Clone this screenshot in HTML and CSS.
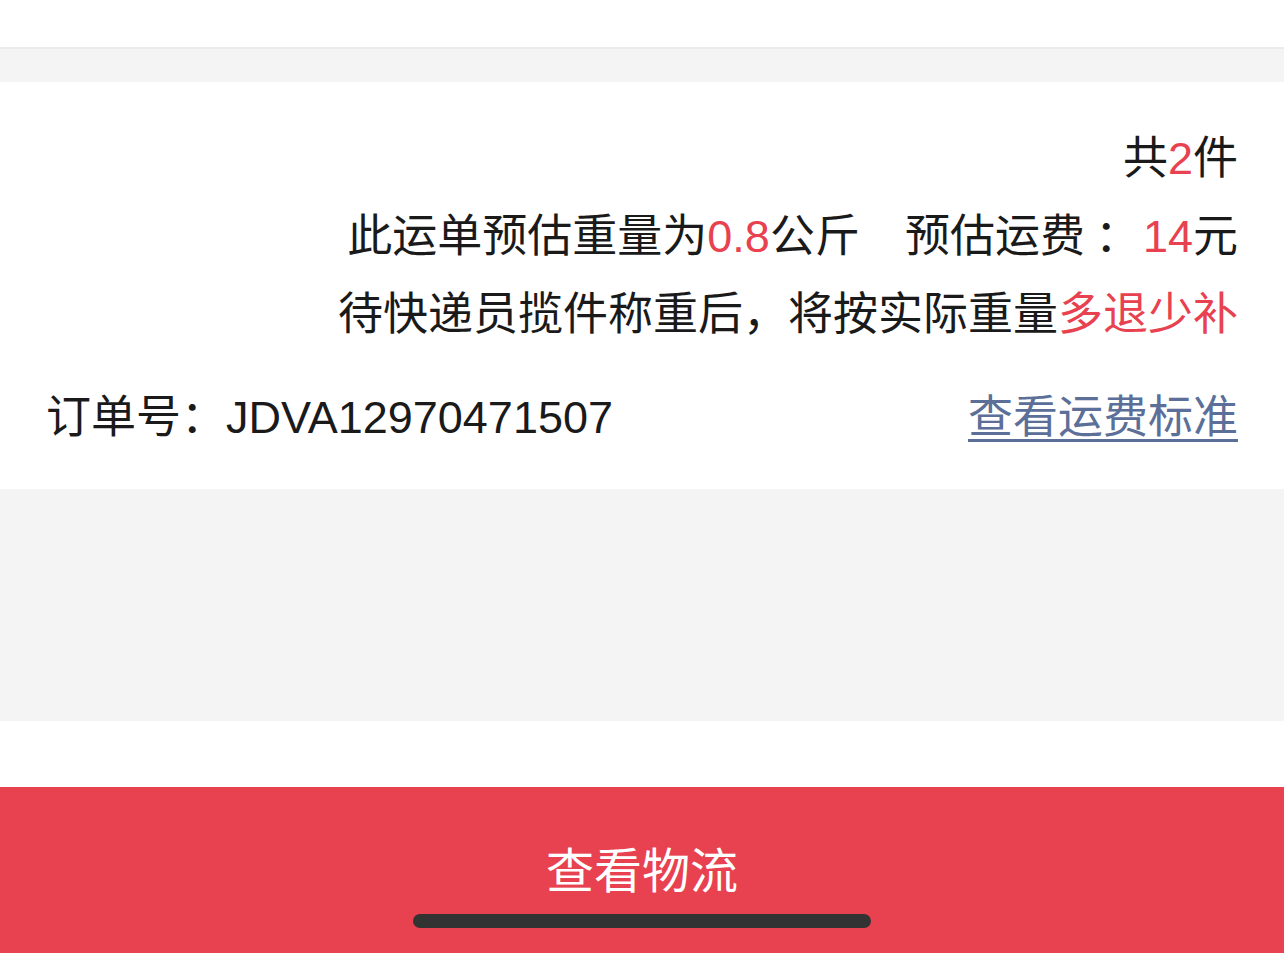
FILE: index.html
```html
<!DOCTYPE html>
<html lang="zh-CN">
<head>
<meta charset="utf-8">
<title>订单详情</title>
<link rel="stylesheet" href="styles.css">
</head>
<body>
<div class="page">
  <div class="topbar"></div>
  <div class="gap-top"></div>
  <section class="card">
    <div class="line">共<span class="red">2</span>件</div>
    <div class="line">此运单预估重量为<span class="red">0.8</span>公斤<span class="spacer"></span>预估运费<span class="colon">：</span><span class="red">14</span>元</div>
    <div class="line">待快递员揽件称重后，将按实际重量<span class="red">多退少补</span></div>
    <div class="order-row">
      <div class="order-no">订单号：JDVA12970471507</div>
      <a class="link" href="#">查看运费标准</a>
    </div>
  </section>
  <div class="gap-mid"></div>
  <div class="white-band"></div>
  <div class="action">
    <div class="action-text">查看物流</div>
    <div class="home-indicator"></div>
  </div>
</div>
</body>
</html>
```
FILE: styles.css
```css
* { box-sizing: border-box; }
html, body {
  margin: 0;
  padding: 0;
  background: #ffffff;
}
body {
  font-family: "Liberation Sans", "Noto Sans CJK SC", sans-serif;
  color: #1a1a1a;
  width: 1284px;
  height: 953px;
  overflow: hidden;
}
.page {
  display: flex;
  flex-direction: column;
  height: 953px;
}
.topbar {
  height: 49px;
  background: #ffffff;
  border-bottom: 2px solid #ebebeb;
}
.gap-top {
  height: 33px;
  background: #f4f4f4;
}
.card {
  height: 407px;
  background: #ffffff;
  padding: 38px 46px 0 46px;
  display: flex;
  flex-direction: column;
}
.line {
  font-size: 45px;
  line-height: 78px;
  text-align: right;
  white-space: nowrap;
}
.red { color: #e8414f; }
.spacer {
  display: inline-block;
  width: 45px;
}
.colon {
  display: inline-block;
  width: 58px;
  padding-left: 10px;
  text-align: left;
}
.order-row {
  margin-top: 25px;
  display: flex;
  justify-content: space-between;
  align-items: center;
  font-size: 45px;
  line-height: 78px;
  white-space: nowrap;
}
.link {
  color: #5b6f98;
  text-decoration: underline;
  text-decoration-thickness: 3px;
  text-underline-offset: 6px;
}
.gap-mid {
  height: 232px;
  background: #f4f4f4;
}
.white-band {
  height: 66px;
  background: #ffffff;
}
.action {
  position: relative;
  flex: 1;
  background: #e8414f;
  padding-top: 45px;
}
.action-text {
  color: #ffffff;
  font-size: 48px;
  line-height: 80px;
  text-align: center;
}
.home-indicator {
  position: absolute;
  left: 413px;
  bottom: 25px;
  width: 458px;
  height: 14px;
  border-radius: 7px;
  background: #333333;
}
```
